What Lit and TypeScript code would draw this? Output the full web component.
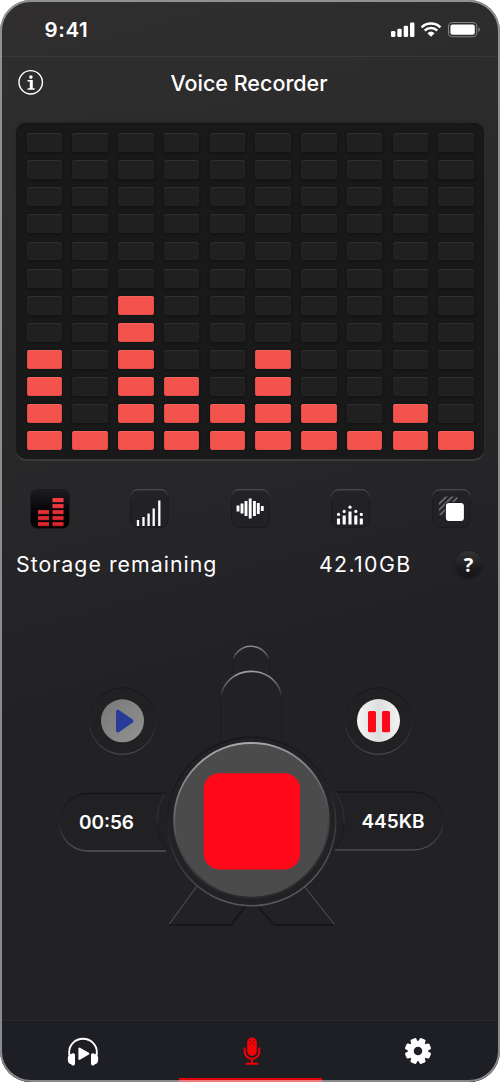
import { LitElement, html, svg, css } from "lit";
import { customElement } from "lit/decorators.js";

const LEVELS = [4, 1, 6, 3, 2, 4, 2, 1, 2, 1];
const ROWS = 12;

@customElement("level-meter")
class LevelMeter extends LitElement {
  static styles = css`
    :host { display: block; margin: 0 14px; box-sizing: border-box; height: 336px; padding: 10px 10px 9px 10.5px; border-radius: 10px;
      background: #1a1919; box-shadow: 0 2px 1px #3b3a3c, 0 -2px 3px #292828, 1px 0 1px #2f2e30, inset 0 1px 2px #151515; }
    .grid { display: grid; grid-template-columns: repeat(10, 1fr); gap: 8.2px 10.2px; height: 317.4px; grid-template-rows: repeat(12, 1fr); }
    .cell { border-radius: 3px; background: #202020; box-shadow: inset 0 1px 0 #303030, inset 0 0 0 0.5px #252525, 0 1px 3px #111; }
    .on { background: #f4524d; box-shadow: inset 0 1px 0 #f4645f, inset 0 0 0 1px #e34c48, 0 0 3px #081414; }
  `;
  render() {
    const cells = [];
    for (let r = 0; r < ROWS; r++)
      for (const level of LEVELS) cells.push(html`<div class="cell ${ROWS - r <= level ? "on" : ""}"></div>`);
    return html`<div class="grid">${cells}</div>`;
  }
}

const statusIcons = html`<svg width="92" height="20" viewBox="388 20 92 20">
  <g fill="#fff">
    <rect x="391" y="31" width="4.4" height="6" rx="1.2"/><rect x="397.3" y="28.7" width="4.4" height="8.3" rx="1.2"/>
    <rect x="403.7" y="25.7" width="4.4" height="11.3" rx="1.2"/><rect x="410" y="22.6" width="4.4" height="14.4" rx="1.2"/>
    <path d="M431 36.8 l-3.6 -3.6 a5.4 5.4 0 0 1 7.2 0z"/>
    <rect x="450.4" y="24.4" width="24.4" height="10.4" rx="2.2"/>
  </g>
  <path d="M424.7 30.6a9 9 0 0 1 12.6 0M421.6 27.3a13.6 13.6 0 0 1 18.8 0" fill="none" stroke="#fff" stroke-width="2.5"/>
  <rect x="448.5" y="22.5" width="28.3" height="14.2" rx="4" fill="none" stroke="#838282" stroke-width="1.1"/>
  <path d="M478.4 27.2v4.8q1.6-.6 1.6-2.4t-1.6-2.4z" fill="#838282"/>
</svg>`;

const infoIcon = html`<svg width="26" height="26" viewBox="0 0 26 26">
  <circle cx="12.7" cy="13.3" r="11.7" fill="none" stroke="#fff" stroke-width="1.4"/>
  <circle cx="12.9" cy="8.1" r="1.8" fill="#fff"/>
  <path d="M9.5 11.100h5.300v8.200h1.900v1.500h-7.100v-1.500h2.200v-6.700h-2.300z" fill="#fff"/>
</svg>`;

const blocks = (x: number, n: number) =>
  Array.from({ length: n }, (_, i) => svg`<rect x=${x} y=${33 - i * 6} width="11" height="4.2" fill=${["#c91d22", "#cc2227", "#d4272c", "#e53238", "#f03b40"][i]}/><path d="M${x} ${35 - i * 6}h11" stroke="#f04248" stroke-width=".8"/>`);

const modeIcons = [
  svg`${blocks(8, 3)}${blocks(22.5, 5)}`,
  svg`<path d="M8 37v-6M13.5 37v-9M18.6 37v-12.4M23.7 37v-17.5M29.3 37v-25.5" stroke="#fff" stroke-width="2.3"/>`,
  svg`<path d="M7 16.5v6M11 14.5v10M15 12v15M19.2 9.5v20M23.4 12v15M27.3 14v11M31.3 17v5" stroke="#fff" stroke-width="2.9"/>`,
  svg`<g stroke="#fff" stroke-width="3.1"><path d="M7.5 35.5v-6M13.2 35.5v-9M19 35.5v-13M24.8 35.5v-9M30.3 35.5v-6"/></g>
      <g fill="#fff"><circle cx="7.5" cy="25.4" r="1.6"/><circle cx="13.2" cy="22.4" r="1.6"/><circle cx="19" cy="18.2" r="1.6"/><circle cx="24.8" cy="22.4" r="1.6"/><circle cx="30.3" cy="25.4" r="1.6"/></g>`,
  svg`<clipPath id="c"><rect x="6.800" y="7.500" width="19" height="19" rx="2"/></clipPath>
      <path clip-path="url(#c)" d="M4 18L18 4M4 24L24 4M4 30L30 4M10 30L36 4" stroke="#69686b" stroke-width="1.9"/>
      <rect x="12.800" y="12.900" width="19.500" height="19.500" rx="3.800" fill="#1b1b1d"/><rect x="13.900" y="14" width="18" height="18" rx="3" fill="#fff"/>`,
];

@customElement("mode-button")
class ModeButton extends LitElement {
  static properties = { icon: { type: Number } };
  declare icon: number;
  static styles = css`
    :host { display: block; }
    svg { display: block; overflow: visible; }
  `;
  render() {
    const first = this.icon === 0;
    return html`<svg width="40" height="40" viewBox="0 0 40 40">
      <defs>
        <linearGradient id="g" x2="0" y2="1"><stop stop-color="#1d1d22"/><stop offset=".55" stop-color="#050507"/><stop offset="1" stop-color="#000"/></linearGradient>
        <linearGradient id="e" x2="0" y2="1"><stop stop-color="#59595b"/><stop offset=".25" stop-color="#1c1c1f"/><stop offset="1" stop-color="#18181a"/></linearGradient>
      </defs>
      ${first
        ? svg`<rect x=".5" y="0.500" width="39" height="39" rx="7" fill="url(#g)" stroke="#19191c"/>`
        : svg`<rect x=".6" y=".8" width="37.6" height="37.4" rx="7" fill="#222126" stroke="url(#e)"/>`}
      ${modeIcons[this.icon]}
    </svg>`;
  }
}

@customElement("recorder-deck")
class RecorderDeck extends LitElement {
  static styles = css`
    :host { display: block; height: 300px; }
    svg { display: block; }
    text { font: 600 19px Inter, "Liberation Sans", sans-serif; fill: #fff; }
  `;
  render() {
    return html`<svg width="496" height="300" viewBox="2 635 496 300">
      <defs>
        <linearGradient id="dome" x2="0" y2="1"><stop stop-color="#8b8a8d"/><stop offset=".28" stop-color="#5b5a5d"/><stop offset=".5" stop-color="#1d1c20"/><stop offset="1" stop-color="#1e1d22"/></linearGradient>
        <linearGradient id="dome2" x2="0" y2="1"><stop stop-color="#a09fa2"/><stop offset=".18" stop-color="#68676a"/><stop offset=".38" stop-color="#1e1d21"/><stop offset="1" stop-color="#1e1d22"/></linearGradient>
        <linearGradient id="well" x2="0" y2="1"><stop stop-color="#161619"/><stop offset=".5" stop-color="#222226"/><stop offset="1" stop-color="#535256"/></linearGradient>
        <linearGradient id="ring" x2=".25" y2="1"><stop stop-color="#151518"/><stop offset=".45" stop-color="#1d1d21"/><stop offset=".8" stop-color="#414044"/><stop offset="1" stop-color="#59585b"/></linearGradient>
        <linearGradient id="rim" x2=".2" y2="1"><stop stop-color="#b9b9b9"/><stop offset=".4" stop-color="#6f6f6f"/><stop offset=".65" stop-color="#454545"/><stop offset="1" stop-color="#2b2b2b"/></linearGradient>
        <linearGradient id="playg" x2="1" y2="1"><stop stop-color="#797979"/><stop offset="1" stop-color="#929292"/></linearGradient>
        <linearGradient id="pauseg" x2="1" y2="0"><stop stop-color="#f5f5f5"/><stop offset=".5" stop-color="#dedede"/><stop offset="1" stop-color="#f3f3f3"/></linearGradient>
      </defs>
      <path d="M232.3 674v-9a18.6 18.6 0 0 1 37.4 0v9" fill="none" stroke="url(#dome)" stroke-width="1.5"/>
      <path d="M221 740v-41a30.2 27.5 0 0 1 60.6 0v41" fill="#222126" stroke="url(#dome2)" stroke-width="1.6"/>

      <circle cx="122.5" cy="721" r="33.3" fill="#212124" stroke="url(#well)"/>
      <circle cx="122.5" cy="720.8" r="21.5" fill="url(#playg)"/>
      <path d="M117.8 711.5v19.200l13.900-9.600z" fill="#293b98" stroke="#293b98" stroke-width="3.6" stroke-linejoin="round"/>
      <circle cx="378.5" cy="721" r="33.3" fill="#212124" stroke="url(#well)"/>
      <circle cx="378.5" cy="720.5" r="21.5" fill="url(#pauseg)"/>
      <rect x="368" y="711" width="8" height="21.2" rx="1.5" fill="#ff0819"/><rect x="382" y="711" width="8" height="21.2" rx="1.5" fill="#ff0819"/>

      <path d="M166 793.5H86.5a28.8 28.8 0 0 0 0 57.5H166" fill="#212124" stroke="url(#well)" stroke-width="1.3"/>
      <path d="M335 792H414a28.8 28.8 0 0 1 0 57.8H335" fill="#212124" stroke="url(#well)" stroke-width="1.3"/>
      <path d="M165 793.5Q156 805 157 826" fill="none" stroke="#333236"/>
      <path d="M157 822Q158 838 168 850" fill="none" stroke="#1a1a1d"/>
      <path d="M336 792.5Q345 807 344 824" fill="none" stroke="#333236"/>
      <path d="M344 822Q344 838 335 849" fill="none" stroke="#1a1a1d"/>

      <path d="M197 886L169 924.5" stroke="#4c4b4f" stroke-width="1.2"/>
      <path d="M169 925H231L245 907M259 908L274 925H334" fill="none" stroke="#151518" stroke-width="1.6"/>
      <path d="M304 886L334.5 924.5" stroke="#4c4b4f" stroke-width="1.2"/>
      <circle cx="251.5" cy="821.5" r="84.2" fill="#222126" stroke="url(#ring)" stroke-width="1.5"/>
      <circle cx="251.5" cy="820.3" r="77.3" fill="#4c4b4b" stroke="url(#rim)" stroke-width="1.9"/>
      <rect x="203.7" y="773.2" width="96.3" height="96.2" rx="15.5" fill="#ff0819"/>
      <text x="79" y="829" textLength="55">00:56</text>
      <text x="361.5" y="827.7" textLength="63">445KB</text>
    </svg>`;
  }
}

const gearTeeth = Array.from({ length: 8 }, (_, i) => svg`<rect x="-3.2" y="-13.2" width="6.4" height="8" rx="1.5" transform="rotate(${22.5 + i * 45})"/>`);

@customElement("app-root")
class AppRoot extends LitElement {
  static styles = css`
    :host { display: block; background: #fff; font-family: Inter, "Liberation Sans", sans-serif; color: #fff; }
    .phone { position: relative; box-sizing: border-box; width: 500px; height: 1082px; padding: 2px 2px 0; border-radius: 31px; overflow: hidden; display: flex; flex-direction: column;
      background: linear-gradient(165deg, #302e2e 0, #2c2b2c 20%, #272628 42%, #222126 60%, #222126 100%); }
    .phone::after { content: ""; position: absolute; inset: 0; border: 2px solid rgba(255, 255, 255, 0.48); border-radius: 31px; pointer-events: none; }
    svg { display: block; flex: none; }
    .status { height: 55px; flex: none; box-sizing: border-box; display: flex; justify-content: space-between; padding: 18px 18px 0 42.5px; border-bottom: 1px solid #3a393a; }
    .time { font-size: 20.5px; font-weight: 600; line-height: 20px; letter-spacing: 0.65px; }
    .title { display: grid; grid-template-columns: 80px 1fr 80px; height: 66px; flex: none; }
    .title svg { margin: 12px 0 0 16px; }
    .name { text-align: center; font-size: 21.5px; line-height: 26px; font-weight: 450; padding: 13px 2px 0 0; letter-spacing: 0; }
    .modes { display: flex; justify-content: space-between; padding: 0 26.5px 0 28px; margin-top: 30px; }
    .storage { display: flex; align-items: center; height: 30px; margin-top: 20px; padding: 0 16px 0 14px; font-size: 21.3px; }
    .label { width: 303px; letter-spacing: 1.03px; white-space: nowrap; }
    .size { flex: 1; letter-spacing: 1.35px; }
    .help { width: 27px; height: 27px; border-radius: 50%; text-align: center; font: 700 20px/27px "Open Sans", Inter, sans-serif;
      background: linear-gradient(#333235, #1b1b1d 65%, #161618); box-shadow: 0 1px 2px #1a1a1c; }
    .deck { margin-top: 56px; }
    .tabs { margin-top: auto; box-sizing: border-box; height: 62px; background: #1e1e25; border-top: 1px solid #2a292c; display: grid; grid-template-columns: 177px 143px 176px; }
    .tab { box-sizing: border-box; display: flex; justify-content: center; padding: 16px 0 0 3px; }
    .library { padding: 15.5px 15px 0 0; }
    .settings { padding: 16px 0 0 16px; }
    .active { border-bottom: 4px solid #e00309; }
  `;
  render() {
    return html`<div class="phone">
      <div class="status"><div class="time">9:41</div>${statusIcons}</div>
      <div class="title">${infoIcon}<div class="name">Voice Recorder</div></div>
      <level-meter></level-meter>
      <div class="modes">${[0, 1, 2, 3, 4].map((i) => html`<mode-button .icon=${i}></mode-button>`)}</div>
      <div class="storage"><span class="label">Storage remaining</span><span class="size">42.10GB</span><span class="help">?</span></div>
      <recorder-deck class="deck"></recorder-deck>
      <div class="tabs">
        <div class="tab library"><svg width="32" height="30" viewBox="0 0 32 30">
          <path d="M2.2 18v-3a13.8 13.3 0 0 1 27.6 0v3" fill="none" stroke="#fff" stroke-width="1.9"/>
          <path d="M3 17h1.5v10H3q-2.2-1-2.2-5T3 17zM29 17h-1.5v10H29q2.2-1 2.2-5T29 17z" fill="#fff"/>
          <rect x="4" y="16.2" width="4" height="12.3" rx="1.7" fill="#fff"/><rect x="24" y="16.2" width="4" height="12.3" rx="1.7" fill="#fff"/>
          <path d="M12.4 11.5v10.400l9-5.200z" fill="#fff" stroke="#fff" stroke-width="2" stroke-linejoin="round"/>
        </svg></div>
        <div class="tab active"><svg width="20" height="30" viewBox="0 0 20 30">
          <rect x="5.2" y=".5" width="9.6" height="18.5" rx="4.8" fill="#f80006"/>
          <path d="M2.7 10.5v4.500a7.300 6.800 0 0 0 14.600 0v-4.500M10 22v4.500M3.500 26.800h13" fill="none" stroke="#f00006" stroke-width="2"/>
          <path d="M7 3.500h2M11 3.500h2M8.500 5.500h2M7 7.500h2M11 7.500h2" stroke="#8c0c10" stroke-width="1"/>
        </svg></div>
        <div class="tab settings"><svg width="28" height="28" viewBox="-14 -14 28 28"><g fill="#fff">${gearTeeth}</g><circle r="7.3" fill="none" stroke="#fff" stroke-width="6"/></svg></div>
      </div>
    </div>`;
  }
}
